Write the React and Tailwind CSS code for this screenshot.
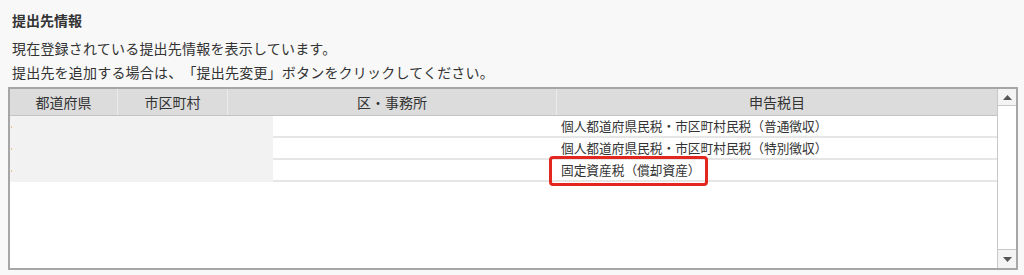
import React from "react";

const rows = [
  "個人都道府県民税・市区町村民税（普通徴収）",
  "個人都道府県民税・市区町村民税（特別徴収）",
  "固定資産税（償却資産）",
];

export default function App() {
  return (
    <div
      className="w-[1024px] h-[275px] bg-[#f8f8f8] pt-[10px] pl-[8px] text-[#333333] overflow-hidden [text-spacing-trim:space-all]"
      style={{ fontFamily: '"Noto Sans CJK JP", "Noto Sans", sans-serif' }}
    >
      <div className="pl-[4px] text-[14px] font-bold leading-[20px]">提出先情報</div>
      <div className="pl-[4px] mt-[6px] text-[14px] tracking-[0.2px] leading-[24px]">
        <div>現在登録されている提出先情報を表示しています。</div>
        <div>提出先を追加する場合は、「提出先変更」ボタンをクリックしてください。</div>
      </div>
      <div className="mt-[3px] w-[1010px] h-[183px] border-2 border-[#a6a6a6] bg-white flex">
        <div className="flex-1 flex flex-col">
          <div className="h-[27px] bg-[#dcdcdc] border-b border-[#c4c4c4] flex text-[14px] leading-[26px] text-[#333333]">
            <div className="w-[108px] border-r border-[#ebebeb] text-center">都道府県</div>
            <div className="w-[110px] border-r border-[#ebebeb] text-center">市区町村</div>
            <div className="w-[329px] border-r border-[#ebebeb] text-center">区・事務所</div>
            <div className="flex-1 text-center">申告税目</div>
          </div>
          {rows.map((t, i) => (
            <div key={i} className="h-[22px] flex">
              <div className="relative w-[263px] bg-[#f2f2f2]">
                <div className="absolute left-[1px] top-[10px] w-[1px] h-[2px] bg-[#e6c48a]" />
              </div>
              <div className="flex-1 flex border-b-2 border-[#e6e6e6]">
                <div className="w-[285px]" />
                <div className="relative pl-[3px] text-[12.7px] leading-[20px] text-[#333333]">
                  {t}
                  {i === 2 && (
                    <div className="absolute left-[-9px] top-[-4px] w-[159px] h-[30px] border-[3px] border-[#e3261f] rounded-[4px]" />
                  )}
                </div>
              </div>
            </div>
          ))}
        </div>
        <div className="w-[19px] border-l border-[#c8c8c8] flex flex-col justify-between bg-white">
          <div className="h-[17px] border-b border-[#c8c8c8] flex items-center justify-center bg-[#f4f4f4]">
            <svg width="9" height="5" viewBox="0 0 9 5">
              <polygon points="0,5 9,5 4.5,0" fill="#555555" />
            </svg>
          </div>
          <div className="h-[19px] border-t border-[#c8c8c8] flex items-center justify-center bg-[#f4f4f4]">
            <svg width="9" height="5" viewBox="0 0 9 5">
              <polygon points="0,0 9,0 4.5,5" fill="#555555" />
            </svg>
          </div>
        </div>
      </div>
    </div>
  );
}
